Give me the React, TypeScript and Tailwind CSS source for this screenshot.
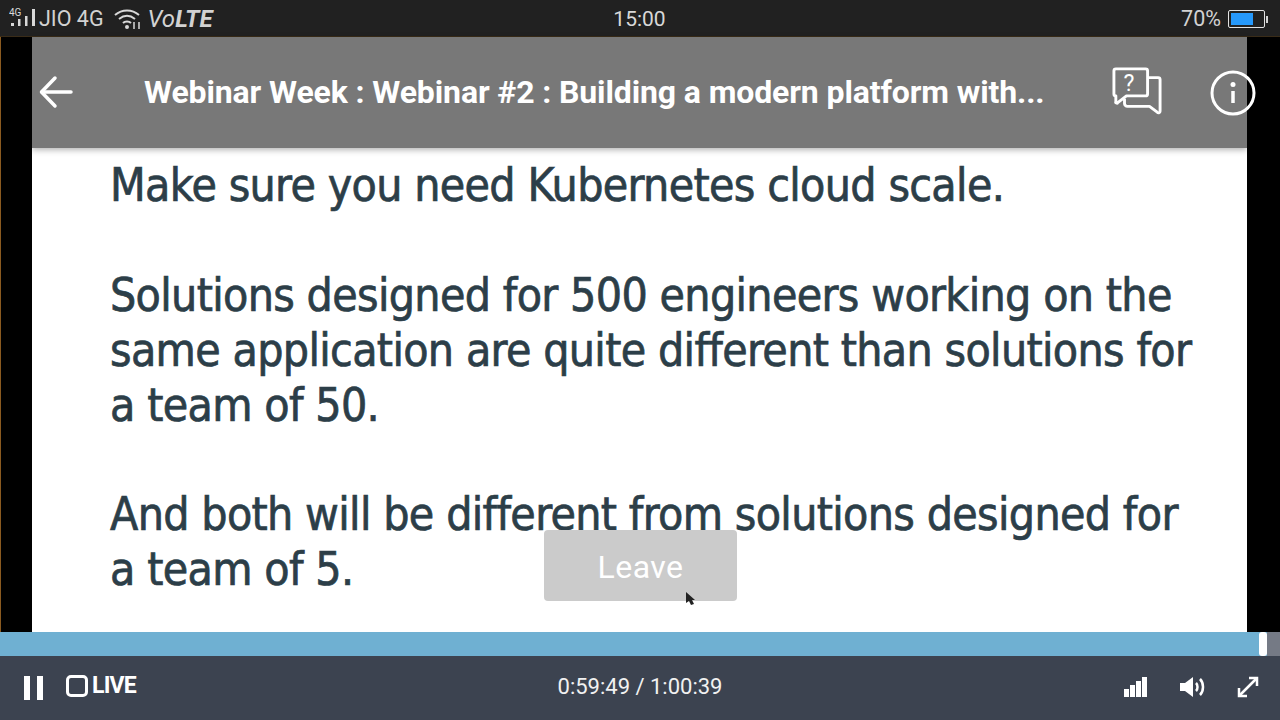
import React from "react";

const slideFont = { fontFamily: '"DejaVu Sans Condensed", "DejaVu Sans", sans-serif' };

/* ---------------- STATUS BAR ---------------- */
const StatusBar = () => (
  <div className="flex h-[36px] items-center justify-between bg-[#212121] pl-[9px] pr-[12px] pt-[2px] text-[#d2d2d2] font-['Roboto',sans-serif]">
    <div className="flex w-[302px] items-center">
      <svg width="30" height="20" viewBox="0 0 30 20" fill="#d8d8d8" className="-mt-[2px]">
        <text x="0" y="8" fontSize="10" fontFamily="Roboto, sans-serif">4G</text>
        <rect x="2" y="15" width="3" height="3" />
        <rect x="9" y="11" width="2.500" height="7" />
        <rect x="16" y="8" width="2.500" height="10" />
        <rect x="23" y="1" width="3" height="17" />
      </svg>
      <span className="text-[21.500px] leading-none">JIO 4G</span>
      <svg width="30" height="22" viewBox="0 0 30 22" fill="none" stroke="#d8d8d8" strokeWidth="2" className="ml-[9px]">
        <path d="M2 7c7-6 17-6 24 0" />
        <path d="M6 11c5-4 11-4 16 0" />
        <path d="M10 15c2-2 6-2 8 0" />
        <circle cx="14" cy="19" r="1" fill="#d8d8d8" />
        <path d="M21 14v7M26 14v7" strokeWidth="1.500" />
      </svg>
      <span className="ml-[5px] text-[24px] italic leading-none">
        Vo<span className="font-bold">LTE</span>
      </span>
    </div>
    <span className="text-[21px] leading-none text-[#d8d8d8]">15:00</span>
    <div className="flex w-[300px] items-center justify-end">
      <span className="text-[21.500px] leading-none">70%</span>
      <div className="ml-[7px] flex h-[18px] w-[37px] items-center rounded-[2px] border border-[#e2e2e2] p-[2px]">
        <div className="h-full w-[70%] bg-[#2699fb]" />
      </div>
      <div className="ml-[1px] h-[7px] w-[2px] bg-[#d2d2d2]" />
    </div>
  </div>
);

/* ---------------- WEBINAR HEADER ---------------- */
const WebinarHeader = () => (
  <div className="relative flex h-[111px] shrink-0 items-center bg-[#787878] shadow-[0_2px_6px_rgba(0,0,0,0.3)]">
    <svg width="36" height="36" viewBox="0 0 36 36" fill="none" stroke="#fff" strokeWidth="3.500" strokeLinecap="round" strokeLinejoin="round" className="ml-[6px] -mt-[2px] shrink-0">
      <path d="M33 18H4" />
      <path d="M17 4 3.500 18 17 32" />
    </svg>
    <h1 className="ml-[70px] -mt-[2px] w-[946px] shrink-0 whitespace-nowrap text-[32px] font-bold leading-none tracking-[-0.12px] text-white font-['Roboto',sans-serif]">
      Webinar Week : Webinar #2 : Building a modern platform with...
    </h1>
    <svg width="50" height="50" viewBox="0 0 52 52" fill="none" stroke="#fff" strokeWidth="3" strokeLinejoin="round" className="ml-[22px] -mt-[1px] shrink-0">
      <path d="M4 2h31a2 2 0 0 1 2 2v24a2 2 0 0 1-2 2H15l-9 7a1 1 0 0 1-2-1V30a2 2 0 0 1-2-2V4a2 2 0 0 1 2-2z" />
      <path d="M37 11h11a2 2 0 0 1 2 2v33c0 2-2 2-3 1l-8-6H16a3 3 0 0 1-3-3v-5" />
      <text x="12" y="25" fontSize="24" fill="#fff" stroke="none" fontFamily="Roboto, sans-serif">?</text>
    </svg>
    <svg width="46" height="46" viewBox="0 0 46 46" fill="none" stroke="#fff" strokeWidth="3" className="ml-[48px] shrink-0">
      <circle cx="23" cy="23" r="21" />
      <circle cx="23" cy="14.500" r="2.500" fill="#fff" stroke="none" />
      <path d="M23 21v12" strokeWidth="3.500" />
    </svg>
  </div>
);

/* ---------------- SLIDE ---------------- */
const Slide = () => (
  <div
    className="flex-1 overflow-hidden bg-white pl-[78px] pt-[10px] text-[46px] leading-[55px] tracking-[-0.67px] text-[#2c3e48] [-webkit-text-stroke:0.7px_#2c3e48]"
    style={slideFont}
  >
    <p>Make sure you need Kubernetes cloud scale.</p>
    <p className="mt-[55px]">
      Solutions designed for 500 engineers working on the
      <br />
      same application are quite different than solutions for
      <br />
      a team of 50.
    </p>
    <p className="mt-[54px]">
      And both will be different from solutions designed for
      <br />
      a team of 5.
    </p>
  </div>
);

/* ---------------- PLAYER CONTROLS ---------------- */
const Controls = () => (
  <div className="relative flex h-[64px] items-center justify-between bg-[#3c4350] px-[24px] text-white">
    <div className="flex w-[300px] items-center">
      <div className="flex gap-[7px]">
        <div className="h-[24px] w-[6px] bg-white" />
        <div className="h-[24px] w-[6px] bg-white" />
      </div>
      <div className="ml-[23px] -mt-[5px] h-[22px] w-[22px] rounded-[5px] border-[3px] border-white" />
      <span className="ml-[4px] -mt-[6px] text-[23px] font-bold leading-none tracking-[-0.8px] font-['Roboto',sans-serif]">LIVE</span>
    </div>
    <span className="-mt-[3px] text-[22px] leading-none text-[#f1f1f1] font-['Roboto',sans-serif]">0:59:49 / 1:00:39</span>
    <div className="-mt-[2px] flex w-[300px] items-center justify-end">
      <svg width="24" height="22" viewBox="0 0 24 22" fill="#fff">
        <rect x="0" y="13" width="5" height="8" />
        <rect x="6" y="9" width="5" height="12" />
        <rect x="12" y="5" width="5" height="16" />
        <rect x="18" y="1" width="5" height="20" />
      </svg>
      <svg width="26" height="22" viewBox="0 0 26 22" fill="none" stroke="#fff" strokeWidth="2.500" className="ml-[32px]">
        <path d="M0 7h5l8-6v20l-8-6H0z" fill="#fff" stroke="none" />
        <path d="M16 7c2 2 2 6 0 8" />
        <path d="M20 3c4 4 4 12 0 16" />
      </svg>
      <svg width="22" height="22" viewBox="0 0 22 22" fill="none" stroke="#fff" strokeWidth="2.500" className="ml-[31px] -mr-[3px]">
        <path d="M2 20 20 2" />
        <path d="M12 2h8v8" />
        <path d="M2 12v8h8" />
      </svg>
    </div>
  </div>
);

/* ---------------- MAIN PAGE ---------------- */
export default function App() {
  return (
    <div className="relative flex h-[720px] w-[1280px] flex-col overflow-hidden bg-black">
      <StatusBar />

      <div className="flex min-h-0 flex-1 border-t border-[#3a2c18]">
        <div className="w-[32px] shrink-0 border-l border-[#8a5a20] bg-black" />
        <div className="flex min-w-0 flex-1 flex-col">
          <WebinarHeader />
          <Slide />
        </div>
        <div className="w-[33px] shrink-0 bg-black" />
      </div>

      {/* progress */}
      <div className="flex h-[24px] shrink-0 bg-[#6fb0d2]">
        <div className="flex-1" />
        <div className="h-full w-[8px] rounded-[3px] bg-white" />
        <div className="w-[13px] bg-[#757a85]" />
      </div>

      <Controls />

      {/* leave button over the video */}
      <div className="absolute left-[544px] top-[530px] flex h-[71px] w-[193px] items-center justify-center rounded-[4px] bg-[#cbcbcb] pt-[2px] text-[32px] tracking-[0.5px] text-white font-['Roboto',sans-serif]">
        Leave
      </div>
      <svg width="12" height="16" viewBox="0 0 12 16" fill="#222" className="absolute left-[685px] top-[591px]">
        <path d="M1 1v11l3-2 2 4 3-1-2-4h3z" />
      </svg>
    </div>
  );
}
